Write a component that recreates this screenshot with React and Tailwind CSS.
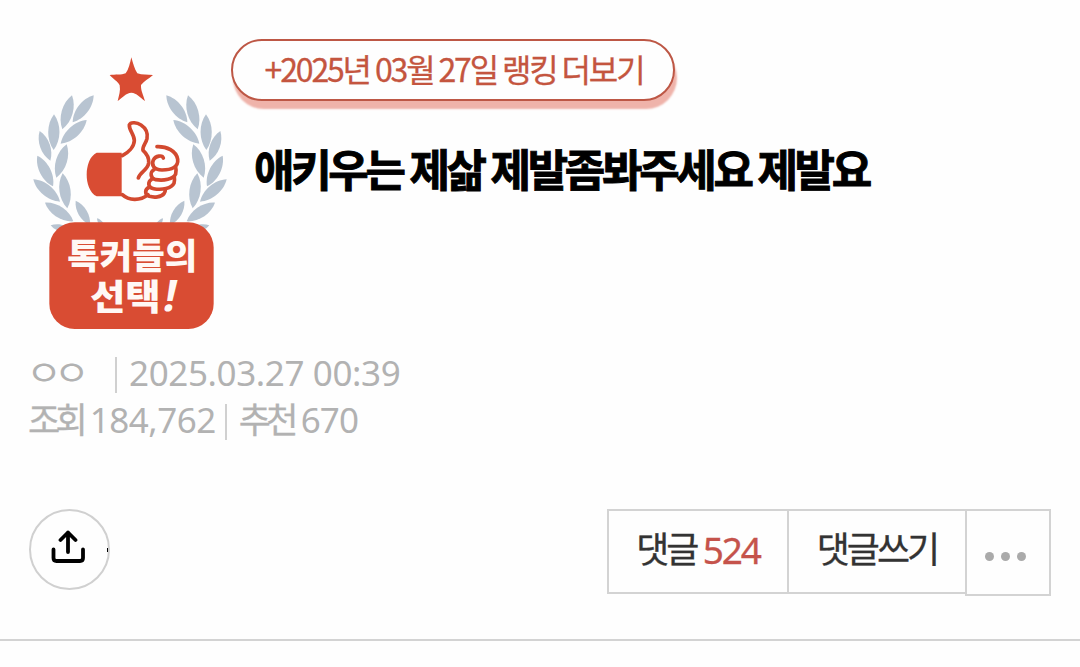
const leaves = [
  [221, 151, 158, 232],
  [156, 151, 127, 253],
  [200, 225, 122, 296],
  [102, 208, 101, 315],
  [140, 298, 109, 398],
  [59, 258, 91, 347],
  [52, 332, 99, 424],
  [128, 385, 142, 490],
  [40, 403, 120, 470],
  [75, 473, 160, 529],
  [167, 467, 210, 540],
  [92, 541, 156, 558],
  [231, 520, 256, 552],
];

// a leaf is two curves bulging on each side of the tip-to-base line
const leafPath = ([x1, y1, x2, y2]) => {
  const dx = (x2 - x1) * 0.21;
  const dy = (y2 - y1) * 0.21;
  const ax = x1 + (x2 - x1) * 0.28;
  const ay = y1 + (y2 - y1) * 0.28;
  const bx = x1 + (x2 - x1) * 0.72;
  const by = y1 + (y2 - y1) * 0.72;
  return `M${x1} ${y1}C${ax - dy} ${ay + dx} ${bx - dy} ${by + dx} ${x2} ${y2}C${bx + dy} ${by - dx} ${ax + dy} ${ay - dx} ${x1} ${y1}Z`;
};

const Laurel = () => (
  <g fill="#b8c4d1">
    {leaves.map((leaf, i) => (
      <path key={i} d={leafPath(leaf)} />
    ))}
  </g>
);

const Emblem = () => (
  <svg className="h-[290px] w-[220px] shrink-0" viewBox="0 0 660 870">
    <Laurel />
    <g transform="translate(660 0) scale(-1 1)">
      <Laurel />
    </g>
    <path
      d="M334 37C339 56 344 73 352 85C366 90 383 89 399 90C386 102 371 109 363 120C362 136 370 151 375 168C360 157 350 144 334 143C318 144 308 157 293 168C297 151 302 137 299 121C293 108 280 103 269 90C286 88 304 91 317 85C326 73 330 56 334 37Z"
      fill="#d94c33"
    />
    <path d="M230 323H305V454H230C190 435 190 342 230 323Z" fill="#d94c33" />
    <g fill="none" stroke="#d2492f" strokeWidth="11" strokeLinecap="round" strokeLinejoin="round">
      <path d="M307 332C325 323 342 306 343 287C343 268 327 256 328 240C332 229 352 233 363 240C378 250 384 265 381 281C378 295 366 304 369 316C378 324 388 336 386 354C383 376 360 380 355 399" />
      <path d="M307 449C326 467 360 469 384 449" />
      <path d="M411 305C440 304 469 317 473 343C476 366 455 375 426 375C402 375 393 360 400 345C407 332 427 329 430 339" />
      <path d="M404 372C388 382 391 400 407 404C431 408 460 403 467 387C469 379 469 374 467 367" />
      <path d="M396 402C382 411 383 427 401 431C426 436 455 430 462 415C464 407 464 402 463 396" />
      <path d="M388 427C374 432 373 449 388 454C402 458 424 457 432 446C435 442 436 438 436 434" />
    </g>
    <rect x="88" y="532" width="493" height="320" rx="76" fill="#d94c33" />
    <g
      className="font-['Noto_Sans_CJK_KR',sans-serif] font-black"
      fill="#fff8f5"
      fontSize="105"
    >
      <text x="142" y="671" textLength="390" lengthAdjust="spacingAndGlyphs">톡커들의</text>
      <text x="210" y="795" textLength="212" lengthAdjust="spacingAndGlyphs">선택</text>
      <text
        className="font-['Noto_Sans',sans-serif] font-bold"
        transform="translate(425 799) skewX(-11)"
        fontSize="130"
      >
        !
      </text>
    </g>
  </svg>
);

const ShareIcon = () => (
  <svg
    className="-mt-1 h-9 w-9"
    viewBox="0 0 36 36"
    fill="none"
    stroke="#000"
    strokeWidth="3.8"
    strokeLinecap="round"
    strokeLinejoin="round"
  >
    <path d="M17 22V2.5M9.5 10L17 2.5L24.5 10" />
    <path d="M2.5 19.5V28Q2.5 31 5.5 31H29Q32 31 32 28V19.5" />
  </svg>
);

const Divider = () => <span className="mt-[5px] h-9 w-0.5 bg-[#d0d0d0]" />;

const App = () => {
  return (
    <div className="h-[667px] w-[1080px] overflow-hidden bg-[#fefefe] font-['Noto_Sans','Noto_Sans_CJK_KR',sans-serif]">
      <header className="flex h-[350px] pl-5 pt-[45px]">
        <Emblem />
        <div className="-ml-[9px] -mt-1.5">
          <a className="flex h-[62px] w-[444px] items-center justify-center rounded-full border-2 border-[#bd5745] bg-[#fefefe] pb-[5px] pl-0.5 shadow-[2px_8px_2px_#efb3aa]">
            <span className="whitespace-nowrap font-['Noto_Sans_CJK_KR',sans-serif] text-[32px] leading-none tracking-[-2.15px] text-[#c4553f] [-webkit-text-stroke:0.3px_#c4553f]">
              +2025년 03월 27일 랭킹 더보기
            </span>
          </a>
          <h1 className="ml-[23px] mt-[35px] whitespace-nowrap font-['Noto_Sans_CJK_KR',sans-serif] text-[44px] font-bold leading-[64px] tracking-[-3.3px] text-black [-webkit-text-stroke:0.9px_black]">
            애키우는 제삶 제발좀봐주세요 제발요
          </h1>
        </div>
      </header>

      <div className="-mt-px ml-[29px] text-[35px] text-[#b2b2b2]">
        <div className="flex h-[47px] items-center whitespace-nowrap leading-[45px]">
          <span className="w-[86px]">
            <span className="-ml-[3px] inline-block origin-left scale-x-[1.12] tracking-[-7.5px]">ㅇㅇ</span>
          </span>
          <Divider />
          <span className="ml-3 tracking-[-0.38px]">2025.03.27 00:39</span>
        </div>
        <div className="flex h-[47px] items-center whitespace-nowrap leading-[45px]">
          <span className="-ml-px tracking-[-4.8px] [-webkit-text-stroke:0.3px_#b2b2b2]">조회</span>
          <span className="ml-[7px] tracking-[-0.5px]">184,762</span>
          <span className="ml-[9px] flex"><Divider /></span>
          <span className="ml-3 tracking-[-4.8px] [-webkit-text-stroke:0.3px_#b2b2b2]">추천</span>
          <span className="ml-[7px] tracking-[-0.8px]">670</span>
        </div>
      </div>

      <div className="mt-[66px] flex h-[132px] justify-between border-b-2 border-[#d3d3d3] pl-[29px] pr-[29px]">
        <button className="flex h-[81px] w-[81px] items-center justify-between rounded-full border-2 border-[#d0d0d0] pl-5">
          <ShareIcon />
          <span className="h-1 w-px bg-black" />
        </button>
        <div className="flex items-start whitespace-nowrap text-[36px] text-[#333]">
          <button className="flex h-[85px] w-[182px] items-center justify-center border-2 border-[#d3d3d3] pb-[3px] tracking-[-3px] [-webkit-text-stroke:0.3px]">
            댓글&nbsp;<span className="text-[37px] tracking-[-2.2px] text-[#c5534b]">524</span>
          </button>
          <button className="flex h-[85px] w-[176px] items-center justify-center border-y-2 border-[#d3d3d3] pb-[3px] tracking-[-3px] [-webkit-text-stroke:0.3px]">
            댓글쓰기
          </button>
          <button className="flex h-[87px] w-[86px] items-center justify-center gap-[7px] border-2 border-[#d3d3d3] pr-[5px] pt-[7px]">
            <span className="h-[9px] w-[9px] rounded-full bg-[#aaa]" />
            <span className="h-[9px] w-[9px] rounded-full bg-[#aaa]" />
            <span className="h-[9px] w-[9px] rounded-full bg-[#aaa]" />
          </button>
        </div>
      </div>
    </div>
  );
};

export default App;
